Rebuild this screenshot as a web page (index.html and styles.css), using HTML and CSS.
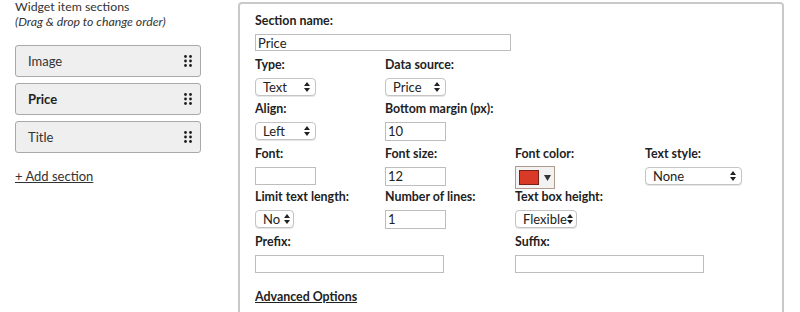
FILE: index.html
```html
<!DOCTYPE html>
<html>
<head>
<meta charset="utf-8">
<link rel="stylesheet" href="styles.css">
</head>
<body>
<div class="page">
  <aside class="sidebar">
    <p class="side-head">Widget item sections<br><em>(Drag &amp; drop to change order)</em></p>
    <ul class="items">
      <li class="item"><span>Image</span><svg class="grip" width="8" height="12" viewBox="0 0 8 12"><circle cx="1.5" cy="1.5" r="1.4"/><circle cx="6.5" cy="1.5" r="1.4"/><circle cx="1.5" cy="6" r="1.4"/><circle cx="6.5" cy="6" r="1.4"/><circle cx="1.5" cy="10.5" r="1.4"/><circle cx="6.5" cy="10.5" r="1.4"/></svg></li>
      <li class="item active"><span>Price</span><svg class="grip" width="8" height="12" viewBox="0 0 8 12"><circle cx="1.5" cy="1.5" r="1.4"/><circle cx="6.5" cy="1.5" r="1.4"/><circle cx="1.5" cy="6" r="1.4"/><circle cx="6.5" cy="6" r="1.4"/><circle cx="1.5" cy="10.5" r="1.4"/><circle cx="6.5" cy="10.5" r="1.4"/></svg></li>
      <li class="item"><span>Title</span><svg class="grip" width="8" height="12" viewBox="0 0 8 12"><circle cx="1.5" cy="1.5" r="1.4"/><circle cx="6.5" cy="1.5" r="1.4"/><circle cx="1.5" cy="6" r="1.4"/><circle cx="6.5" cy="6" r="1.4"/><circle cx="1.5" cy="10.5" r="1.4"/><circle cx="6.5" cy="10.5" r="1.4"/></svg></li>
    </ul>
    <a class="add" href="#">+ Add section</a>
  </aside>

  <section class="panel">
    <div class="field">
      <label class="name-label">Section name:</label>
      <div class="input w-name">Price</div>
    </div>

    <div class="grid">
      <div class="field">
        <label>Type:</label>
        <div class="select w-type"><span>Text</span><svg class="arrows" width="6" height="10" viewBox="0 0 6 10"><path d="M3 0L6 4H0Z"/><path d="M3 10L6 6H0Z"/></svg></div>
      </div>
      <div class="field">
        <label>Data source:</label>
        <div class="select w-type"><span>Price</span><svg class="arrows" width="6" height="10" viewBox="0 0 6 10"><path d="M3 0L6 4H0Z"/><path d="M3 10L6 6H0Z"/></svg></div>
      </div>
      <div></div><div></div>

      <div class="field">
        <label>Align:</label>
        <div class="select w-type"><span>Left</span><svg class="arrows" width="6" height="10" viewBox="0 0 6 10"><path d="M3 0L6 4H0Z"/><path d="M3 10L6 6H0Z"/></svg></div>
      </div>
      <div class="field">
        <label>Bottom margin (px):</label>
        <div class="input w-small">10</div>
      </div>
      <div></div><div></div>

      <div class="field">
        <label>Font:</label>
        <div class="input w-small w-font"></div>
      </div>
      <div class="field">
        <label>Font size:</label>
        <div class="input w-small">12</div>
      </div>
      <div class="field">
        <label>Font color:</label>
        <div class="color"><span class="swatch"></span><svg class="caret" width="7" height="6" viewBox="0 0 7 6"><path d="M0 0H7L3.5 6Z"/></svg></div>
      </div>
      <div class="field">
        <label>Text style:</label>
        <div class="select w-style"><span>None</span><svg class="arrows" width="6" height="10" viewBox="0 0 6 10"><path d="M3 0L6 4H0Z"/><path d="M3 10L6 6H0Z"/></svg></div>
      </div>

      <div class="field">
        <label>Limit text length:</label>
        <div class="select w-no"><span>No</span><svg class="arrows" width="6" height="10" viewBox="0 0 6 10"><path d="M3 0L6 4H0Z"/><path d="M3 10L6 6H0Z"/></svg></div>
      </div>
      <div class="field">
        <label>Number of lines:</label>
        <div class="input w-small">1</div>
      </div>
      <div class="field">
        <label>Text box height:</label>
        <div class="select w-flex"><span>Flexible</span><svg class="arrows" width="6" height="10" viewBox="0 0 6 10"><path d="M3 0L6 4H0Z"/><path d="M3 10L6 6H0Z"/></svg></div>
      </div>
      <div></div>

      <div class="field span2">
        <label>Prefix:</label>
        <div class="input w-fix"></div>
      </div>
      <div class="field span2">
        <label>Suffix:</label>
        <div class="input w-fix"></div>
      </div>
    </div>

    <a class="adv" href="#">Advanced Options</a>
  </section>
</div>
</body>
</html>
```

FILE: styles.css
```css
html, body {
  margin: 0;
  padding: 0;
  background: #fff;
}
body {
  font-family: Lato, "Open Sans", Arial, sans-serif;
  color: #222;
  font-size: 13px;
}
.page {
  display: flex;
  align-items: flex-start;
  width: 800px;
  height: 312px;
  overflow: hidden;
}
.sidebar {
  width: 238px;
  flex: none;
  padding: 0 0 0 15px;
  box-sizing: border-box;
}
.side-head {
  margin: 0;
  font-size: 12.3px;
  line-height: 14.5px;
  color: #333;
}
.side-head em {
  font-style: italic;
}
.items {
  list-style: none;
  margin: 16px 0 0;
  padding: 0;
  width: 186px;
  display: flex;
  flex-direction: column;
  gap: 6px;
}
.item {
  height: 32px;
  box-sizing: border-box;
  border: 1px solid #a9a9a9;
  border-radius: 3px;
  background: #efefef;
  display: flex;
  align-items: center;
  justify-content: space-between;
  padding: 0 8px 0 12px;
  font-size: 13px;
  color: #333;
}
.item.active {
  font-weight: bold;
  color: #222;
}
.grip {
  fill: #1e1e1e;
}
.add {
  display: inline-block;
  margin-top: 15px;
  color: #333;
  font-size: 13px;
  text-decoration: underline;
}

.panel {
  flex: none;
  margin-top: 2px;
  width: 546px;
  height: 330px;
  box-sizing: border-box;
  border: 2px solid #c9c9c9;
  border-radius: 4px;
  padding: 10px 15px 0 15px;
}
.field {
  display: flex;
  flex-direction: column;
  align-items: flex-start;
}
label {
  font-weight: bold;
  font-size: 12.4px;
  line-height: 14px;
  color: #222;
  margin-bottom: 6px;
}
.grid {
  display: grid;
  grid-template-columns: 130px 130px 130px 130px;
  grid-template-rows: 44px 45px 43px 45px auto;
  margin-top: 7px;
}
.span2 {
  grid-column: span 2;
}
.input {
  height: 18px;
  box-sizing: border-box;
  border: 1px solid #bdbdbd;
  background: #fff;
  font-size: 13px;
  line-height: 16px;
  padding: 0 2px;
  color: #222;
}
.w-name { width: 256px; height: 17px; }
.w-small { width: 61px; height: 19px; line-height: 17px; }
.w-font { height: 18px; }
.w-fix { width: 189px; }
.select {
  height: 18px;
  box-sizing: border-box;
  border: 1px solid #c4c4c4;
  border-radius: 4px;
  background: #fff;
  display: flex;
  align-items: center;
  justify-content: space-between;
  padding: 0 5px 0 7px;
  font-size: 13px;
  color: #222;
  box-shadow: 0 1px 0 #e6e6e6;
}
.arrows { fill: #222; }
.w-type { width: 61px; }
.w-no { width: 39px; padding-right: 3px; }
.w-flex { width: 62px; padding-right: 3px; }
.w-style { width: 97px; padding-left: 7px; }
.color {
  width: 40px;
  height: 23px;
  margin-top: -1px;
  box-sizing: border-box;
  border: 1px solid #b29a8c;
  background: #f2f2f2;
  display: flex;
  align-items: center;
  padding-left: 3px;
  gap: 5px;
}
.swatch {
  width: 20px;
  height: 15px;
  box-sizing: border-box;
  background: #d93a28;
  border: 1px solid #7a2016;
}
.caret { fill: #333; }
.adv {
  display: inline-block;
  margin-top: 16px;
  font-weight: bold;
  font-size: 12.4px;
  color: #222;
  text-decoration: underline;
}
```
